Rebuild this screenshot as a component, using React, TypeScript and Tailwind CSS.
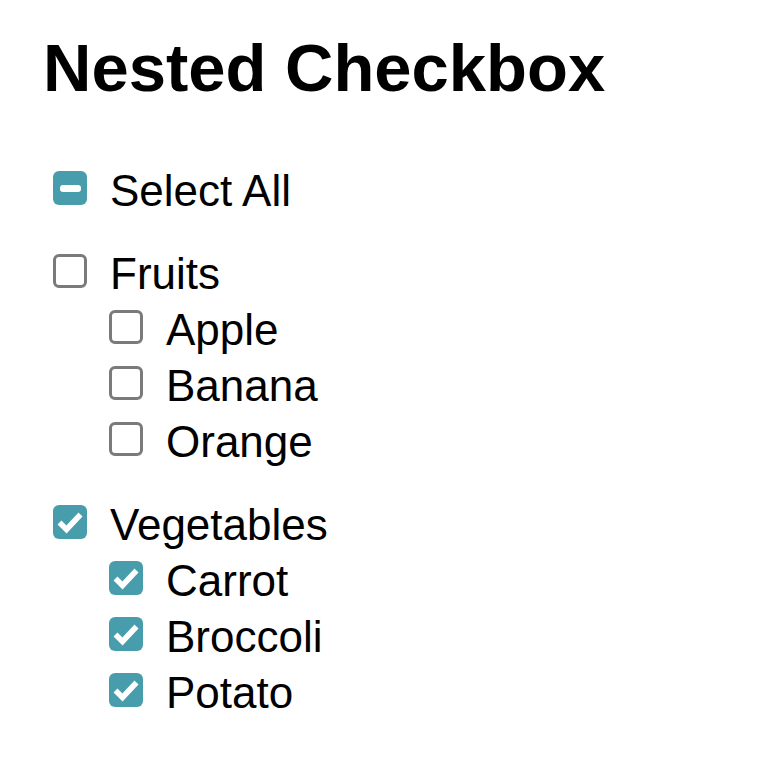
import React from "react";

type Item = { label: string; checked: boolean };

function Box({ checked, indeterminate }: { checked: boolean; indeterminate?: boolean }) {
  if (indeterminate) {
    return (
      <span className="w-[34px] h-[34px] shrink-0 rounded-[6px] bg-[#489dad] flex items-center justify-center">
        <span className="w-[21px] h-[7px] rounded-[3px] bg-white" />
      </span>
    );
  }
  if (checked) {
    return (
      <span className="w-[34px] h-[34px] shrink-0 rounded-[6px] bg-[#489dad] block">
        <svg width="34" height="34" viewBox="0 0 34 34" className="block">
          <polyline
            points="6.5,17.5 13.5,24.5 27.5,9.5"
            fill="none"
            stroke="white"
            strokeWidth="5.5"
            strokeLinejoin="miter"
          />
        </svg>
      </span>
    );
  }
  return <span className="w-[34px] h-[34px] shrink-0 rounded-[6px] border-[3px] border-[#7a7a7a] bg-white" />;
}

function Row({ label, checked, indeterminate }: { label: string; checked: boolean; indeterminate?: boolean }) {
  return (
    <label className="flex items-center h-[56px] gap-[23px]">
      <Box checked={checked} indeterminate={indeterminate} />
      <span className="leading-none pt-[6px]">{label}</span>
    </label>
  );
}

const groups: { name: string; checked: boolean; items: Item[] }[] = [
  {
    name: "Fruits",
    checked: false,
    items: [
      { label: "Apple", checked: false },
      { label: "Banana", checked: false },
      { label: "Orange", checked: false },
    ],
  },
  {
    name: "Vegetables",
    checked: true,
    items: [
      { label: "Carrot", checked: true },
      { label: "Broccoli", checked: true },
      { label: "Potato", checked: true },
    ],
  },
];

export default function App() {
  return (
    <div className="min-h-screen bg-white text-black pl-10 pt-[34px] font-['Liberation_Sans',Arial,sans-serif]">
      <h1 className="ml-[3px] text-[67px] font-bold leading-none">Nested Checkbox</h1>
      <div className="mt-[59px] pl-[13px] text-[44px]">
        <Row label="Select All" checked={false} indeterminate />
        {groups.map((g) => (
          <div key={g.name} className="mt-[27px]">
            <Row label={g.name} checked={g.checked} />
            <div className="pl-[56px]">
              {g.items.map((it) => (
                <Row key={it.label} label={it.label} checked={it.checked} />
              ))}
            </div>
          </div>
        ))}
      </div>
    </div>
  );
}
